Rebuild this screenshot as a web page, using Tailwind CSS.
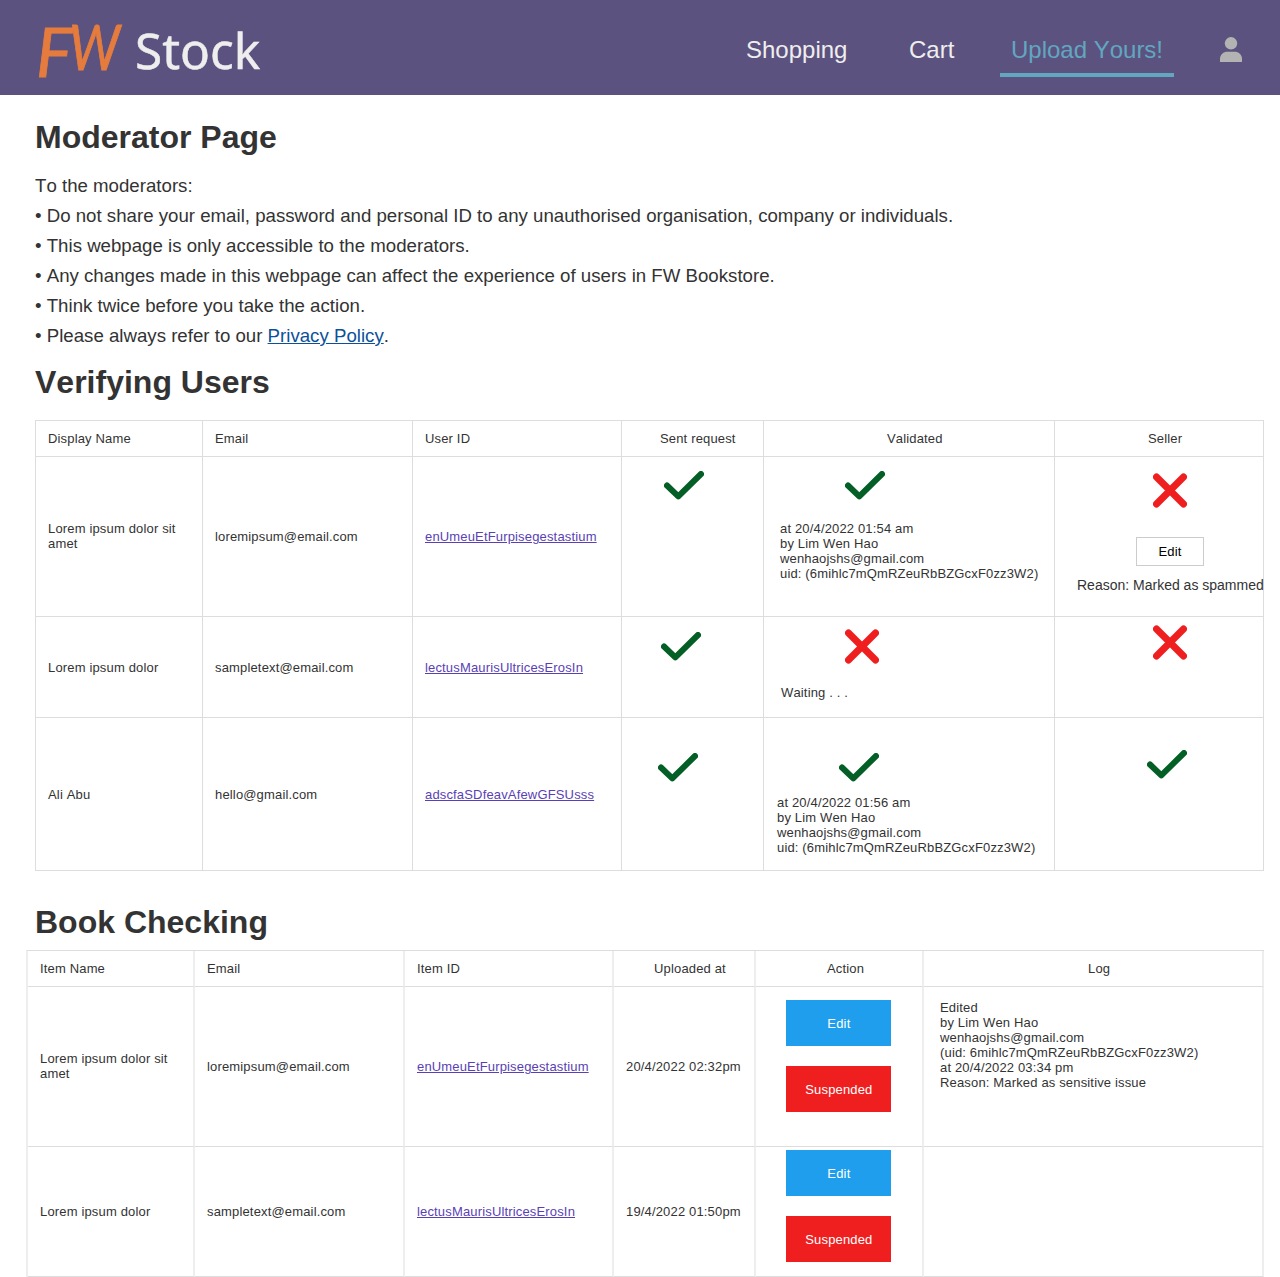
<!DOCTYPE html>
<html lang="en">
<head>
<meta charset="utf-8">
<title>FW Stock - Moderator Page</title>
<script src="https://cdn.jsdelivr.net/npm/@tailwindcss/browser@4"></script>
</head>
<body class="bg-white font-['Liberation_Sans',Arial,sans-serif] text-[#333333] overflow-x-hidden [font-kerning:none]">
<svg class="hidden">
  <symbol id="check" viewBox="0 0 40 29"><path d="M3 14.5 14.3 25.4 37 3" fill="none" stroke="#035f26" stroke-width="6" stroke-linecap="round" stroke-linejoin="round"/></symbol>
  <symbol id="cross" viewBox="0 0 34 35"><path d="M3.5 4 30.5 31M30.5 4 3.5 31" fill="none" stroke="#ef1f1f" stroke-width="7" stroke-linecap="round"/></symbol>
</svg>

<header class="flex h-[95px] bg-[#5c527f] text-[#eeeeee]">
  <div class="flex w-[746px] pl-[36px] whitespace-nowrap">
    <span class="w-[33px] pt-[12px] font-['Lato'] italic text-[67px] leading-[78px] text-[#e57c3e] [-webkit-text-stroke:0.8px_#e57c3e]"><span class="inline-block origin-left scale-x-[1.02]">F</span></span>
    <span class="w-[66px] pt-[7px] font-['Lato'] italic text-[62px] leading-[78px] text-[#e57c3e] [-webkit-text-stroke:0.8px_#e57c3e]"><span class="inline-block origin-left scale-x-[0.86]">W</span></span>
    <span class="pt-[11px] font-['Noto_Sans'] text-[49.5px] leading-[78px] [-webkit-text-stroke:0.5px_#eeeeee]">Stock</span>
  </div>
  <nav class="flex text-[24px] leading-[28px] whitespace-nowrap">
    <a class="w-[163px] pt-[36px]">Shopping</a>
    <a class="w-[91px] pt-[36px]">Cart</a>
    <a class="h-[77px] w-[174px] border-b-4 border-[#62a6bf] pt-[36px] text-center text-[#62a6bf]">Upload Yours!</a>
  </nav>
  <svg class="mt-[37px] ml-[46px] h-[25px] w-[22px]" viewBox="0 0 22 25" fill="#b3b3b3"><circle cx="11" cy="6.3" r="6.2"/><path d="M0 25V22C0 17.500 3.500 14.800 7.500 14.800H14.500C18.500 14.800 22 17.500 22 22V25Z"/></svg>
</header>

<main>
  <h1 class="mt-[24px] ml-[35px] text-[32px] leading-[37px] font-bold">Moderator Page</h1>
  <div class="mt-[15px] ml-[35px] text-[18.67px] leading-[30px] whitespace-nowrap">
    <p>To the moderators:</p>
    <p>• Do not share your email, password and personal ID to any unauthorised organisation, company or individuals.</p>
    <p>• This webpage is only accessible to the moderators.</p>
    <p>• Any changes made in this webpage can affect the experience of users in FW Bookstore.</p>
    <p>• Think twice before you take the action.</p>
    <p>• Please always refer to our <a class="text-[#0b5199] underline">Privacy Policy</a>.</p>
  </div>
  <h2 class="mt-[13px] ml-[35px] text-[32px] leading-[37px] font-bold">Verifying Users</h2>

  <section class="mt-[19px] ml-[35px] grid w-[1229px] grid-cols-[167px_210px_209px_142px_291px_209px] grid-rows-[36px_160px_101px_153px] border-t border-l border-[#dddddd] text-[13px] leading-[15px] tracking-[0.16px] whitespace-nowrap *:border-r *:border-b *:border-[#dddddd]">
    <div class="flex items-center pl-3">Display Name</div>
    <div class="flex items-center pl-3">Email</div>
    <div class="flex items-center pl-3">User ID</div>
    <div class="flex items-center pl-[38px]">Sent request</div>
    <div class="flex items-center pl-[123px]">Validated</div>
    <div class="flex items-center pl-[93px]">Seller</div>

    <div class="flex items-center pb-0.5 pl-3">Lorem ipsum dolor sit<br>amet</div>
    <div class="flex items-center pl-3">loremipsum@email.com</div>
    <div class="flex items-center pl-3"><a class="text-[#5a3fb5] underline">enUmeuEtFurpisegestastium</a></div>
    <div class="pt-[14px] pl-[42px]"><svg class="h-[29px] w-[40px]"><use href="#check"/></svg></div>
    <div class="pt-[14px] pl-[16px]">
      <svg class="ml-[65px] h-[29px] w-[40px]"><use href="#check"/></svg>
      <p class="mt-[21px]">at 20/4/2022 01:54 am<br>by Lim Wen Hao<br>wenhaojshs@gmail.com<br>uid: (6mihlc7mQmRZeuRbBZGcxF0zz3W2)</p>
    </div>
    <div class="pt-[16px] pl-[22px]">
      <svg class="ml-[76px] h-[35px] w-[34px]"><use href="#cross"/></svg>
      <button class="mt-[29px] ml-[59px] block h-[29px] w-[68px] border border-[#cccccc] bg-white text-black">Edit</button>
      <p class="mt-[11px] text-[14px] leading-[16px] tracking-normal">Reason: Marked as spammed</p>
    </div>

    <div class="flex items-center pl-3">Lorem ipsum dolor</div>
    <div class="flex items-center pl-3">sampletext@email.com</div>
    <div class="flex items-center pl-3"><a class="text-[#5a3fb5] underline">lectusMaurisUltricesErosIn</a></div>
    <div class="pt-[15px] pl-[39px]"><svg class="h-[29px] w-[40px]"><use href="#check"/></svg></div>
    <div class="pt-[12px] pl-[17px]">
      <svg class="ml-[64px] h-[35px] w-[34px]"><use href="#cross"/></svg>
      <p class="mt-[21px]">Waiting . . .</p>
    </div>
    <div class="pt-[8px] pl-[98px]"><svg class="h-[35px] w-[34px]"><use href="#cross"/></svg></div>

    <div class="flex items-center pl-3">Ali Abu</div>
    <div class="flex items-center pl-3">hello@gmail.com</div>
    <div class="flex items-center pl-3"><a class="text-[#5a3fb5] underline">adscfaSDfeavAfewGFSUsss</a></div>
    <div class="pt-[35px] pl-[36px]"><svg class="h-[29px] w-[40px]"><use href="#check"/></svg></div>
    <div class="pt-[35px] pl-[13px]">
      <svg class="ml-[62px] h-[29px] w-[40px]"><use href="#check"/></svg>
      <p class="mt-[13px]">at 20/4/2022 01:56 am<br>by Lim Wen Hao<br>wenhaojshs@gmail.com<br>uid: (6mihlc7mQmRZeuRbBZGcxF0zz3W2)</p>
    </div>
    <div class="pt-[31.5px] pl-[92px]"><svg class="h-[29px] w-[40px]"><use href="#check"/></svg></div>
  </section>

  <h2 class="mt-[33px] ml-[35px] text-[32px] leading-[37px] font-bold">Book Checking</h2>

  <section class="mt-[9px] ml-[26px] grid w-[1238px] grid-cols-[167px_210px_209px_142px_168px_340px] grid-rows-[36px_160px_130px] border-t border-l-2 border-t-[#dddddd] border-l-[#eeeeee] text-[13px] leading-[15px] tracking-[0.16px] whitespace-nowrap *:border-r-2 *:border-b *:border-r-[#eeeeee] *:border-b-[#dddddd]">
    <div class="flex items-center pl-3">Item Name</div>
    <div class="flex items-center pl-3">Email</div>
    <div class="flex items-center pl-3">Item ID</div>
    <div class="flex items-center pl-[40px]">Uploaded at</div>
    <div class="flex items-center pl-[71px]">Action</div>
    <div class="flex items-center pl-[164px]">Log</div>

    <div class="flex items-center pb-0.5 pl-3">Lorem ipsum dolor sit<br>amet</div>
    <div class="flex items-center pl-3">loremipsum@email.com</div>
    <div class="flex items-center pl-3"><a class="text-[#5a3fb5] underline">enUmeuEtFurpisegestastium</a></div>
    <div class="flex items-center pl-3">20/4/2022 02:32pm</div>
    <div class="flex flex-col gap-5 pt-[13px] pl-[30.4px] text-white">
      <button class="h-[46px] w-[105px] bg-[#1f9eed]">Edit</button>
      <button class="h-[46px] w-[105px] bg-[#ef1f1f]">Suspended</button>
    </div>
    <div class="pt-[13px] pl-[16px]">Edited<br>by Lim Wen Hao<br>wenhaojshs@gmail.com<br>(uid: 6mihlc7mQmRZeuRbBZGcxF0zz3W2)<br>at 20/4/2022 03:34 pm<br>Reason: Marked as sensitive issue</div>

    <div class="flex items-center pl-3">Lorem ipsum dolor</div>
    <div class="flex items-center pl-3">sampletext@email.com</div>
    <div class="flex items-center pl-3"><a class="text-[#5a3fb5] underline">lectusMaurisUltricesErosIn</a></div>
    <div class="flex items-center pl-3">19/4/2022 01:50pm</div>
    <div class="flex flex-col gap-5 pt-[3px] pl-[30.4px] text-white">
      <button class="h-[46px] w-[105px] bg-[#1f9eed]">Edit</button>
      <button class="h-[46px] w-[105px] bg-[#ef1f1f]">Suspended</button>
    </div>
    <div></div>
  </section>
</main>
</body>
</html>
